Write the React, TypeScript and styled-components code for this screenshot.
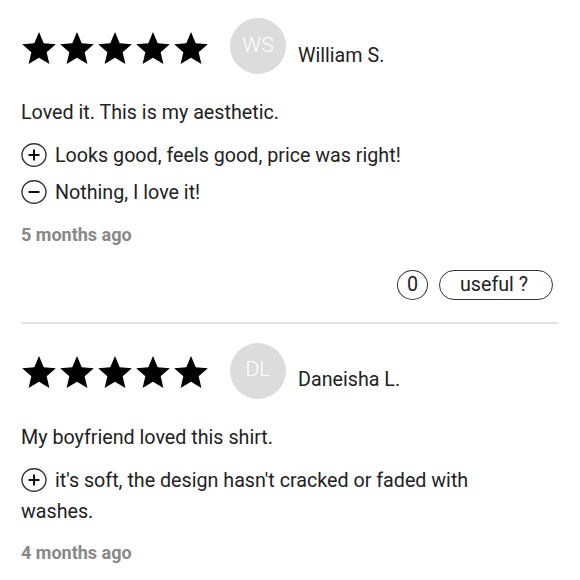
import React from 'react';
import styled, {createGlobalStyle} from "styled-components";

const GlobalStyle = createGlobalStyle`
  body {
    margin: 0;
    background: #fff;
    font-family: Roboto, "Liberation Sans", sans-serif;
    color: #222;
  }
`

const List = styled.div`
  width: 537px;
  padding: 20px 22px 0 21px;
`

const Review = styled.div<{ last?: boolean }>`
  padding-bottom: ${props => props.last ? '0' : '22px'};
  margin-bottom: ${props => props.last ? '0' : '21px'};
  border-bottom: ${props => props.last ? 'none' : '2px solid #e3e3e3'};
`

const Header = styled.div`
  display: flex;
  align-items: center;
`

const Stars = styled.div`
  display: flex;
  gap: 4px;
  margin-left: 1px;
  margin-top: 1px;
`

const Avatar = styled.div`
  width: 56px;
  height: 56px;
  border-radius: 50%;
  background: #dcdcdc;
  color: #fff;
  font-size: 21px;
  font-weight: 300;
  display: flex;
  align-items: center;
  justify-content: center;
  margin-left: 22px;
  margin-top: -2px;
  align-self: flex-start;
  padding-bottom: 3px;
  box-sizing: border-box;
`

const Name = styled.div`
  font-size: 19.7px;
  margin-left: 12px;
  margin-top: 16px;
`

const Body = styled.p`
  font-size: 19.7px;
  line-height: 27px;
  margin: 25px 0 14px;
`

const Point = styled.div`
  font-size: 19.7px;
  line-height: 31px;
  max-width: 500px;
  margin-bottom: 6px;
`

const PointIcon = styled.svg`
  vertical-align: -5px;
  margin-right: 8px;
`

const Date = styled.div`
  font-size: 18px;
  font-weight: 700;
  color: #888;
  line-height: 24px;
  margin-top: 14.5px;
`

const Actions = styled.div`
  display: flex;
  justify-content: flex-end;
  gap: 11px;
  margin-top: 23px;
  padding-right: 5px;
`

const Count = styled.div`
  width: 31px;
  height: 30px;
  border: 1.5px solid #333;
  border-radius: 50%;
  box-sizing: border-box;
  display: flex;
  align-items: center;
  justify-content: center;
  font-size: 19.7px;
`

const Useful = styled.button`
  width: 114px;
  height: 30px;
  border: 1.5px solid #333;
  border-radius: 15px;
  background: #fff;
  font-family: Roboto, "Liberation Sans", sans-serif;
  font-size: 19.7px;
  color: #222;
  padding: 0 4px 0 0;
  cursor: pointer;
`

const Star = () => (
    <svg width="34" height="32" viewBox="2 2 20 19">
        <path d="M12 17.27L18.18 21l-1.64-7.03L22 9.24l-7.19-.61L12 2 9.19 8.63 2 9.24l5.46 4.73L5.82 21z" fill="#000"/>
    </svg>
)

const Sign = ({minus}: { minus?: boolean }) => (
    <PointIcon width="26" height="24" viewBox="0 0 26 24">
        <ellipse cx="13" cy="12" rx="12" ry="11.2" fill="none" stroke="#333" strokeWidth="1.4"/>
        <path d="M7.5 12h11" stroke="#111" strokeWidth="2"/>
        {!minus && <path d="M13 6.5v11" stroke="#111" strokeWidth="2"/>}
    </PointIcon>
)

interface ReviewInterface {
    initials: string
    name: string
    text: string
    pro?: string
    con?: string
    date: string
    showActions?: boolean
    last?: boolean
}

const reviews: Array<ReviewInterface> = [
    {
        initials: 'WS',
        name: 'William S.',
        text: 'Loved it. This is my aesthetic.',
        pro: 'Looks good, feels good, price was right!',
        con: 'Nothing, I love it!',
        date: '5 months ago',
        showActions: true
    },
    {
        initials: 'DL',
        name: 'Daneisha L.',
        text: 'My boyfriend loved this shirt.',
        pro: "it's soft, the design hasn't cracked or faded with washes.",
        date: '4 months ago',
        last: true
    }
]

const ReviewCard: React.FC<ReviewInterface> = ({initials, name, text, pro, con, date, showActions, last}) => (
    <Review last={last}>
        <Header>
            <Stars>
                {[0, 1, 2, 3, 4].map(i => <Star key={i}/>)}
            </Stars>
            <Avatar>{initials}</Avatar>
            <Name>{name}</Name>
        </Header>
        <Body>{text}</Body>
        {pro && <Point><Sign/>{pro}</Point>}
        {con && <Point><Sign minus/>{con}</Point>}
        <Date>{date}</Date>
        {showActions && (
            <Actions>
                <Count>0</Count>
                <Useful>useful ?</Useful>
            </Actions>
        )}
    </Review>
)

const App = () => {
    return (
        <>
            <GlobalStyle/>
            <List>
                {reviews.map((item, index) => <ReviewCard key={index} {...item}/>)}
            </List>
        </>
    );
};

export default App;
